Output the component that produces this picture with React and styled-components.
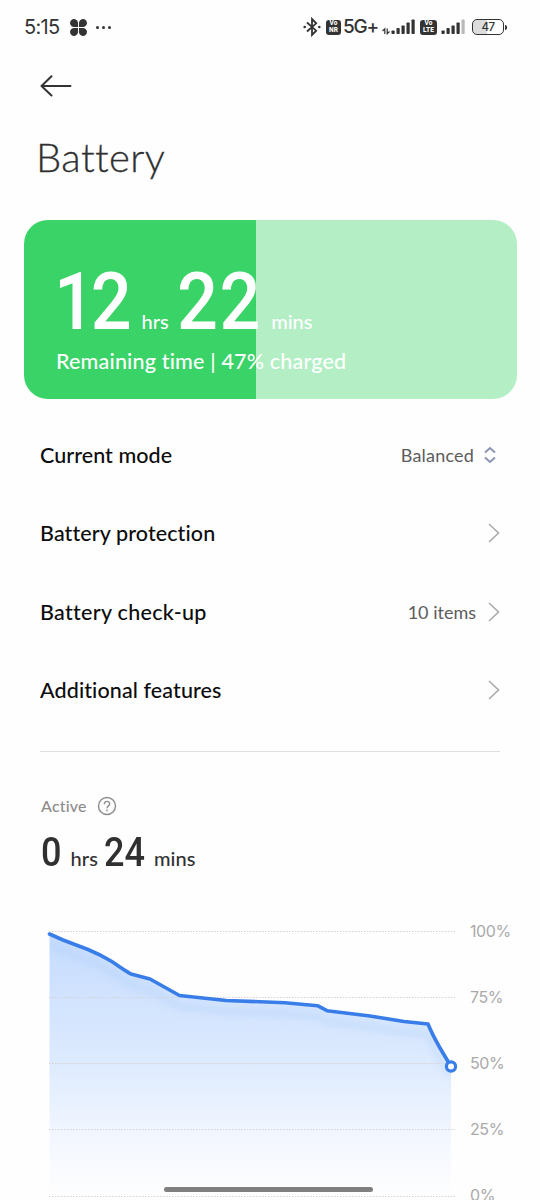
import styled, { createGlobalStyle } from "styled-components";

const GlobalStyle = createGlobalStyle`
  * { box-sizing: border-box; }
  body {
    margin: 0;
    background: #fefefe;
    font-family: Lato, "Liberation Sans", sans-serif;
    font-variant-ligatures: none;
  }
`;

const rows = [
  { label: "Current mode", value: "Balanced", picker: true, ls: 0.05 },
  { label: "Battery protection", ls: 0.1 },
  { label: "Battery check-up", value: "10 items", ls: 0.3 },
  { label: "Additional features", ls: 0.1 },
];

const levels = ["100%", "75%", "50%", "25%", "0%"];
const gridY = [21.5, 87.5, 153.5, 219.5, 286.5];

const line =
  "M9.5 24 L23 30 L48 39.5 Q60 44.5 71 51 C78 55.500 84 60 91 64 L110 69 L139.500 85.500 L186 90.500 L245 92.700 L277.500 95.700 L287 100.700 L330 106 L364 111.500 L388 114 C392 124 396 131 400 138 L411 156.500";

const Bars = ({ dim }) => (
  <svg width="25" height="16" viewBox="0 0 25 16">
    {[3.5, 6, 8.500, 11.500, 14.500].map((h, i) => (
      <rect key={h} x={i * 5 + 0.500} y={15 - h} width="3.2" height={h} rx="0.8"
        fill={dim && i === 4 ? "#b9b9b9" : "#333"} />
    ))}
  </svg>
);

const App = () => {
  return (
    <Screen>
      <GlobalStyle />
      <StatusBar>
        <Clock>5:15</Clock>
        <svg width="17" height="17" viewBox="0 0 17 17" fill="#333">
          <path d="M8 8 H4.500 A4 4 0 1 1 8 4.500 Z M9 8 V4.500 A4 4 0 1 1 12.500 8 Z M8 9 V12.500 A4 4 0 1 1 4.500 9 Z M9 9 H12.500 A4 4 0 1 1 9 12.500 Z" />
        </svg>
        <Dots><i /><i /><i /></Dots>
        <Spacer />
        <svg width="18" height="20" viewBox="0 0 18 20" fill="none" stroke="#333" strokeWidth="1.800">
          <path d="M4 5.500 L13.200 13.700 L9 18 V2 L13.200 6.300 L4 14.500" />
          <circle cx="1.700" cy="10" r="1.300" fill="#333" stroke="none" />
          <circle cx="16.300" cy="10" r="1.300" fill="#333" stroke="none" />
        </svg>
        <Badge $w={15}><span>Vo</span><span>NR</span></Badge>
        <Network>5G+</Network>
        <svg width="9" height="16" viewBox="0 0 9 16" fill="none" stroke="#333" strokeWidth="1.200">
          <path d="M0.500 12 L2.800 9.800 V15 M5.200 9.500 V14.700 L7.500 12.500" />
        </svg>
        <Bars />
        <Badge $w={17} $left={4}><span>Vo</span><span>LTE</span></Badge>
        <SecondSignal><Bars dim /></SecondSignal>
        <Battery><span>47</span></Battery>
        <Nub />
      </StatusBar>

      <BackButton aria-label="Back">
        <svg width="32" height="22" viewBox="0 0 32 22" fill="none" stroke="#333" strokeWidth="2" strokeLinecap="round" strokeLinejoin="round">
          <path d="M30.500 11 H1.500 M11.500 1.300 L1.500 11 L11.500 20.500" />
        </svg>
      </BackButton>

      <Title>Battery</Title>

      <ChargeCard>
        <BigTime>
          <Slot $w={85.5}><BigDigits $ls={-4.5} $shift={-2.5}>12</BigDigits></Slot>
          <Unit>hrs</Unit>
          <Slot $w={94.5} $left={8}><BigDigits $ls={1.7} $shift={0}>22</BigDigits></Slot>
          <Unit>mins</Unit>
        </BigTime>
        <Caption>Remaining time | 47% charged</Caption>
      </ChargeCard>

      <List>
        {rows.map((row) => (
          <Row key={row.label}>
            <Label $ls={row.ls}>{row.label}</Label>
            {row.value && <Value $picker={row.picker}>{row.value}</Value>}
            {row.picker ? (
              <svg width="14" height="18" viewBox="0 0 14 18" fill="none" stroke="#8d94b3" strokeWidth="2">
                <path d="M2 6.500 L7 2 L12 6.500 M2 11.500 L7 16 L12 11.500" />
              </svg>
            ) : (
              <svg width="12" height="20" viewBox="0 0 12 20" fill="none" stroke="#aaa" strokeWidth="1.600">
                <path d="M1 1 L10.500 10 L1 19" />
              </svg>
            )}
          </Row>
        ))}
      </List>
      <Divider />

      <ActiveHeader>
        <span>Active</span>
        <svg width="20" height="20" viewBox="0 0 20 20" fill="none" stroke="#8c8c8c" strokeWidth="1.400">
          <circle cx="10" cy="10" r="8.500" />
          <path d="M7.300 8.200 C7.300 4.300 12.700 4.600 12.600 8 C12.500 9.900 10 9.900 10 12.200" />
          <path d="M10 13.600 V15.200" />
        </svg>
      </ActiveHeader>
      <ActiveTime>
        <Slot $w={29.5}><Digits>0</Digits></Slot>
        <ActiveUnit>hrs</ActiveUnit>
        <Slot $w={50} $left={6}><Digits>24</Digits></Slot>
        <ActiveUnit>mins</ActiveUnit>
      </ActiveTime>

      <Chart>
        <svg width="420" height="290" viewBox="0 0 420 290">
          <defs>
            <linearGradient id="area" gradientUnits="userSpaceOnUse" x1="0" y1="24" x2="0" y2="286">
              <stop offset="0" stopColor="#c5dbfe" />
              <stop offset="0.500" stopColor="#deebfe" />
              <stop offset="0.780" stopColor="#f3f7ff" />
              <stop offset="1" stopColor="#fefefe" />
            </linearGradient>
            <clipPath id="under"><path d={`${line} V286 H9.500 Z`} /></clipPath>
            <filter id="soft" x="-10%" y="-20%" width="120%" height="150%"><feGaussianBlur stdDeviation="3.500" /></filter>
          </defs>
          <path d={`${line} V286 H9.500 Z`} fill="url(#area)" />
          <g clipPath="url(#under)">
            <path d={line} transform="translate(0 11)" fill="none" stroke="#9fc6f5" strokeOpacity="0.300" strokeWidth="6" filter="url(#soft)" />
          </g>
          {gridY.map((y) => (
            <path key={y} d={`M9 ${y} H415`} stroke="#d6d1d4" strokeDasharray="1.500 1.500" />
          ))}
          <path d={line} fill="none" stroke="#387de8" strokeWidth="3.600" strokeLinecap="round" strokeLinejoin="round" />
          <circle cx="411" cy="156.500" r="4.600" fill="#fff" stroke="#387de8" strokeWidth="3.200" />
        </svg>
        <Levels>
          {levels.map((level) => <span key={level}>{level}</span>)}
        </Levels>
      </Chart>
      <HomeBar />
    </Screen>
  );
};

export default App;

const Screen = styled.div`
  position: relative;
  width: 540px;
  height: 1200px;
  overflow: hidden;
  display: flex;
  flex-direction: column;
  background: #fefefe;
  & > * { flex-shrink: 0; }
`;

const StatusBar = styled.header`
  height: 54px;
  padding: 0 33px 0 24px;
  display: flex;
  align-items: center;
  color: #333;
  svg { flex: none; }
`;

const Clock = styled.span`
  width: 46px;
  font: 400 20px/54px Inter, sans-serif;
  letter-spacing: -0.7px;
`;

const Dots = styled.span`
  display: flex;
  gap: 3px;
  margin-left: 9px;
  i {
    width: 3px;
    height: 3px;
    border-radius: 50%;
    background: #333;
  }
`;

const Spacer = styled.span`
  flex: 1;
`;

const Badge = styled.span`
  width: ${(p) => p.$w}px;
  height: 15px;
  margin-left: ${(p) => p.$left || 5}px;
  border-radius: 3px;
  background: #333;
  color: #fff;
  display: flex;
  flex-direction: column;
  align-items: center;
  justify-content: center;
  font: 800 6.5px/7px Roboto, sans-serif;
  letter-spacing: 0.2px;
`;

const Network = styled.span`
  width: 41px;
  padding-left: 2px;
  font: 500 19px/54px Inter, sans-serif;
  letter-spacing: -1.2px;
  white-space: nowrap;
`;

const SecondSignal = styled.span`
  display: flex;
  margin: 0 6px 0 4px;
`;

const Battery = styled.span`
  width: 32px;
  height: 16px;
  border: 1.5px solid #333;
  border-radius: 5px;
  background: linear-gradient(90deg, #ddd 47%, #fefefe 47%);
  display: flex;
  align-items: center;
  justify-content: center;
  font: 500 11.5px/13px Inter, sans-serif;
  letter-spacing: -0.5px;
`;

const Nub = styled.span`
  width: 2px;
  height: 5px;
  margin-left: 1px;
  border-radius: 0 2px 2px 0;
  background: #333;
`;

const BackButton = styled.button`
  width: 32px;
  height: 22px;
  margin: 21px 0 0 40px;
  padding: 0;
  border: none;
  background: none;
  display: flex;
`;

const Title = styled.h1`
  margin: 35px 0 0 36px;
  height: 51px;
  font-size: 40px;
  line-height: 50px;
  font-weight: 300;
  letter-spacing: 0.4px;
  color: #303030;
  -webkit-text-stroke: 0.3px #303030;
`;

const ChargeCard = styled.section`
  margin: 37px 23.5px 0;
  height: 178.5px;
  padding: 42px 0 0 32.5px;
  border-radius: 24px;
  color: #fff;
  background: linear-gradient(90deg, #39d368 47%, #b3eec5 47%);
`;

const BigTime = styled.div`
  display: flex;
  align-items: baseline;
  height: 80px;
  line-height: 80px;
`;

const Slot = styled.span`
  width: ${(p) => p.$w}px;
  margin-left: ${(p) => p.$left || 0}px;
`;

const BigDigits = styled.b`
  display: inline-block;
  font: 500 80px/80px Roboto, sans-serif;
  letter-spacing: ${(p) => p.$ls}px;
  margin-left: ${(p) => p.$shift}px;
  transform: scaleX(0.9);
  transform-origin: left;
`;

const Unit = styled.span`
  font-size: 20px;
  font-weight: 500;
`;

const Caption = styled.div`
  margin-top: 5px;
  font-size: 21.5px;
  font-weight: 500;
  line-height: 28px;
  letter-spacing: 0.18px;
`;

const List = styled.ul`
  margin: 17px 40px 0;
  padding: 0;
  list-style: none;
`;

const Row = styled.li`
  height: 78.5px;
  display: flex;
  align-items: center;
`;

const Label = styled.span`
  flex: 1;
  font-size: 21.5px;
  font-weight: 500;
  letter-spacing: ${(p) => p.$ls}px;
  color: #0c0c0c;
`;

const Value = styled.span`
  margin-right: ${(p) => (p.$picker ? 9 : 12)}px;
  font-size: 18px;
  letter-spacing: ${(p) => (p.$picker ? 0.2 : 0)}px;
  color: #5c5c5c;
  & + svg { margin-right: ${(p) => (p.$picker ? 3 : 0)}px; }
`;

const Divider = styled.hr`
  width: 460px;
  height: 1px;
  margin: 21px 40px 0;
  border: none;
  background: #dfdfdf;
`;

const ActiveHeader = styled.div`
  display: flex;
  align-items: center;
  height: 24px;
  margin: 42px 0 0 41px;
  color: #8c8c8c;
  font-size: 16px;
  font-weight: 500;
  letter-spacing: 0.2px;
  span { width: 55.5px; }
`;

const ActiveTime = styled.div`
  display: flex;
  align-items: baseline;
  height: 48px;
  margin: 10px 0 0 41px;
  color: #303030;
  line-height: 48px;
`;

const Digits = styled.b`
  display: inline-block;
  font: 500 41px/48px Roboto, sans-serif;
  transform: scaleX(0.88);
  transform-origin: left;
`;

const ActiveUnit = styled.span`
  font-size: 20px;
  font-weight: 500;
  letter-spacing: 0.1px;
`;

const Chart = styled.section`
  display: flex;
  margin: 34px 0 0 40px;
  height: 310px;
`;

const Levels = styled.div`
  display: flex;
  flex-direction: column;
  margin: -12px 0 0 10px;
  color: #a9a9a9;
  font: 400 16px/66px Inter, sans-serif;
  letter-spacing: -0.4px;
`;

const HomeBar = styled.div`
  position: absolute;
  left: 164px;
  bottom: 8.5px;
  width: 209px;
  height: 5px;
  border-radius: 3px;
  background: #7f7f7f;
`;
